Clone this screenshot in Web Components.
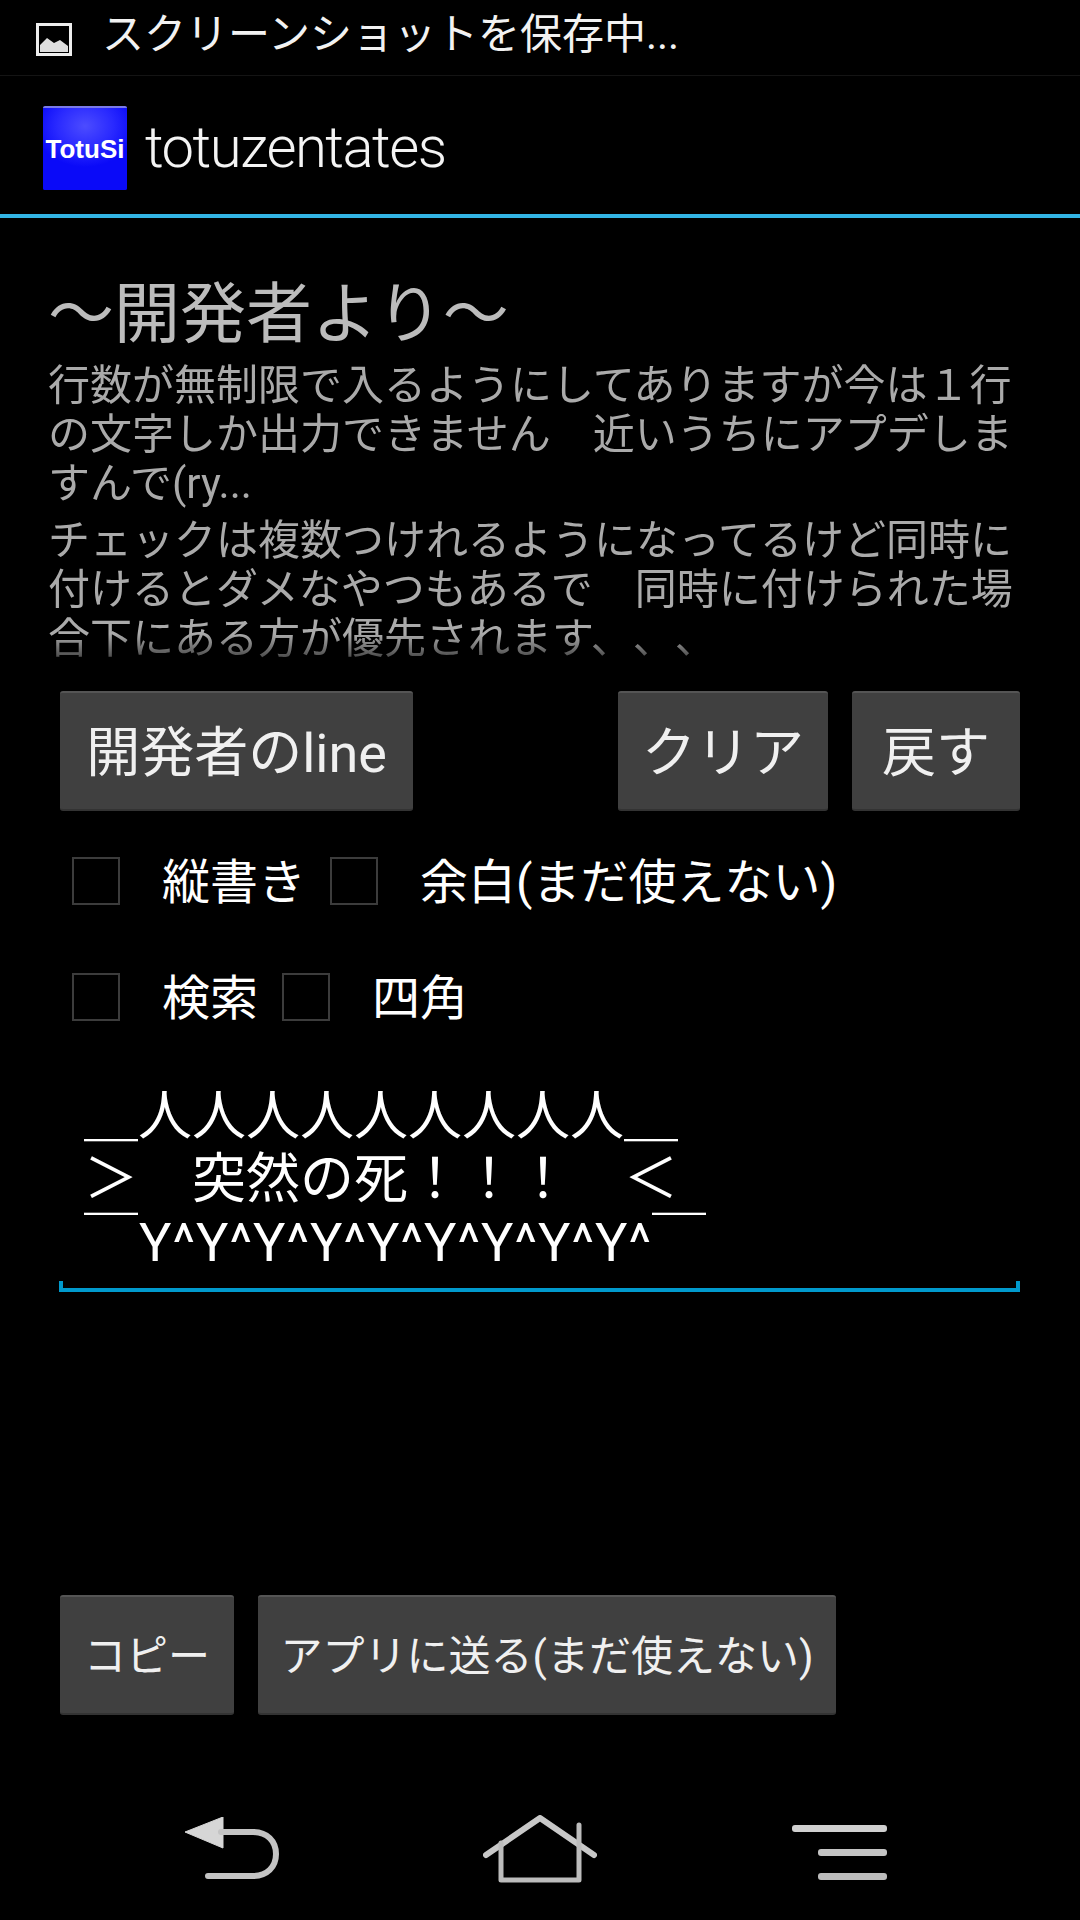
<!DOCTYPE html>
<html lang="ja">
<head>
<meta charset="utf-8">
<title>totuzentates</title>
<style>
  html, body { margin: 0; background: #000; }
  body { font-family: Roboto, "Noto Sans CJK JP", sans-serif; color: #fff; text-spacing-trim: space-all; }
</style>
</head>
<body>
<app-screen>
  <status-bar>スクリーンショットを保存中...</status-bar>
  <action-bar>totuzentates</action-bar>
  <dev-notes>
    <span slot="heading">〜開発者より〜</span>
    <p>行数が無制限で入るようにしてありますが今は１行の文字しか出力できません　近いうちにアプデしますんで(ry...</p>
    <p>チェックは複数つけれるようになってるけど同時に付けるとダメなやつもあるで　同時に付けられた場合下にある方が優先されます、、、</p>
  </dev-notes>
  <button-row>
    <holo-button style="width:353px">開発者のline</holo-button>
    <holo-button slot="end" style="width:210px">クリア</holo-button>
    <holo-button slot="end" style="width:168px">戻す</holo-button>
  </button-row>
  <check-row>
    <holo-check>縦書き</holo-check>
    <holo-check>余白(まだ使えない)</holo-check>
  </check-row>
  <check-row>
    <holo-check>検索</holo-check>
    <holo-check>四角</holo-check>
  </check-row>
  <edit-area>
    <div>＿人人人人人人人人人＿</div>
    <div>＞　突然の死！！！　＜</div>
    <div style="letter-spacing:1px">￣Y^Y^Y^Y^Y^Y^Y^Y^Y^￣</div>
  </edit-area>
  <button-row slot="footer">
    <holo-button size="small" style="width:174px">コピー</holo-button>
    <holo-button size="small" style="width:578px">アプリに送る(まだ使えない)</holo-button>
  </button-row>
  <nav-bar slot="footer"></nav-bar>
</app-screen>

<script>
  class AppScreen extends HTMLElement {
    constructor() {
      super();
      this.attachShadow({ mode: 'open' }).innerHTML = `
        <style>
          :host { display: flex; flex-direction: column; height: 1920px; width: 1080px; overflow: hidden; background: #000; }
          .main { flex: 1; display: flex; flex-direction: column; }
          .footer { display: flex; flex-direction: column; }
        </style>
        <div class="main"><slot></slot></div>
        <div class="footer"><slot name="footer"></slot></div>`;
    }
  }

  class StatusBar extends HTMLElement {
    constructor() {
      super();
      this.attachShadow({ mode: 'open' }).innerHTML = `
        <style>
          :host { display: flex; align-items: center; height: 75px; padding-left: 36px; border-bottom: 1px solid #141414; font-size: 42px; color: #f2f2f2; }
          svg { width: 36px; height: 33px; margin-right: 30px; margin-top: 4px; flex: none; }
          .text { padding-bottom: 14px; }
        </style>
        <svg viewBox="0 0 36 33">
          <rect x="1.5" y="1.5" width="33" height="30" fill="none" stroke="#eee" stroke-width="3"/>
          <path d="M4 29V22L11 15L18 20L24 17L32 23V29Z" fill="#ddd"/>
        </svg>
        <span class="text"><slot></slot></span>`;
    }
  }

  class ActionBar extends HTMLElement {
    constructor() {
      super();
      this.attachShadow({ mode: 'open' }).innerHTML = `
        <style>
          :host { display: flex; align-items: center; height: 138px; padding-left: 43px; border-bottom: 4px solid #33b5e5; font-size: 58px; font-weight: 300; letter-spacing: -1.5px; color: #f4f4f4; }
          .logo {
            width: 84px; height: 84px; flex: none; margin-right: 18px; margin-top: 6px; box-sizing: border-box;
            display: flex; align-items: center; justify-content: center;
            background: radial-gradient(ellipse 60% 50% at 50% 22%, #4c4cff 0%, #2a2aff 55%, #0a0af8 100%), #00f;
            border-top: 2px solid #7a7ae8;
            border-radius: 2px;
            font: bold 26px "Liberation Sans", sans-serif; letter-spacing: 0; color: #fff;
          }
          .title { padding-top: 4px; }
        </style>
        <div class="logo">TotuSi</div>
        <span class="title"><slot></slot></span>`;
    }
  }

  class DevNotes extends HTMLElement {
    constructor() {
      super();
      this.attachShadow({ mode: 'open' }).innerHTML = `
        <style>
          :host { display: block; height: 462px; box-sizing: border-box; padding: 57px 48px 0; overflow: hidden; font-size: 42px; line-height: 49px; color: #aaa;
            -webkit-mask-image: linear-gradient(#000 calc(100% - 46px), transparent calc(100% - 4px)); mask-image: linear-gradient(#000 calc(100% - 46px), transparent calc(100% - 4px)); }
          .heading { display: block; font-size: 66px; line-height: 80px; color: #bcbcbc; margin-bottom: 6px; }
          ::slotted(p) { margin: 0 0 8px; }
        </style>
        <slot name="heading" class="heading"></slot>
        <div class="body"><slot></slot></div>`;
    }
  }

  class ButtonRow extends HTMLElement {
    constructor() {
      super();
      this.attachShadow({ mode: 'open' }).innerHTML = `
        <style>
          :host { display: flex; padding: 11px 60px 0; gap: 24px; }
          .end { display: flex; gap: 24px; margin-left: auto; }
        </style>
        <slot></slot>
        <div class="end"><slot name="end"></slot></div>`;
    }
  }

  class HoloButton extends HTMLElement {
    constructor() {
      super();
      this.attachShadow({ mode: 'open' }).innerHTML = `
        <style>
          :host { display: flex; align-items: center; justify-content: center; box-sizing: border-box; height: 120px; padding-bottom: 6px; border-radius: 3px; font-size: 54px; white-space: nowrap; color: #f0f0f0;
            background: #404040; border-top: 2px solid #555; border-bottom: 2px solid #333; }
          :host([size="small"]) { font-size: 42px; }
        </style>
        <slot></slot>`;
    }
  }

  class CheckRow extends HTMLElement {
    constructor() {
      super();
      this.attachShadow({ mode: 'open' }).innerHTML = `
        <style>
          :host { display: flex; align-items: center; height: 116px; padding-left: 72px; gap: 24px; }
          :host(:first-of-type) { margin-top: 12px; }
        </style>
        <slot></slot>`;
    }
  }

  class HoloCheck extends HTMLElement {
    constructor() {
      super();
      this.attachShadow({ mode: 'open' }).innerHTML = `
        <style>
          :host { display: flex; align-items: center; font-size: 48px; color: #fff; }
          .box { width: 48px; height: 48px; box-sizing: border-box; border: 2px solid #3c3c3c; margin-right: 42px; flex: none; }
          .label { padding-bottom: 6px; }
        </style>
        <div class="box"></div>
        <span class="label"><slot></slot></span>`;
    }
  }

  class EditArea extends HTMLElement {
    constructor() {
      super();
      this.attachShadow({ mode: 'open' }).innerHTML = `
        <style>
          :host { display: block; position: relative; margin: 22px 60px 0 59px; padding: 8px 25px 18px; font-size: 54px; line-height: 63px; color: #fff; white-space: nowrap; }
          .line { position: absolute; left: 0; right: 0; bottom: 0; height: 11px; box-sizing: border-box; border: 4px solid #0099cc; border-top: 0; }
        </style>
        <slot></slot>
        <div class="line"></div>`;
    }
  }

  class NavBar extends HTMLElement {
    constructor() {
      super();
      this.attachShadow({ mode: 'open' }).innerHTML = `
        <style>
          :host { display: flex; align-items: flex-start; height: 205px; box-sizing: border-box; padding: 100px 0 0 185px; }
          svg { display: block; flex: none; }
          .back { width: 94px; height: 62px; margin-top: 2px; }
          .home { width: 114px; height: 68px; margin-left: 204px; }
          .menu { width: 95px; height: 56px; margin-left: 195px; margin-top: 10px; }
        </style>
        <svg class="back" viewBox="0 0 94 62">
          <path d="M0 15L38 0V31Z" fill="#d6d6d6" stroke="#d6d6d6" stroke-width="1" stroke-linejoin="round"/>
          <path d="M36 15H68C82 15 91 24 91 37C91 50 82 59 68 59H23" fill="none" stroke="#c4c4c4" stroke-width="6" stroke-linecap="round"/>
        </svg>
        <svg class="home" viewBox="0 0 114 68">
          <path d="M3 40L57 3L111 40" fill="none" stroke="#c8c8c8" stroke-width="6" stroke-linecap="round" stroke-linejoin="round"/>
          <path d="M18 28V65H96V10" fill="none" stroke="#bcbcbc" stroke-width="5" stroke-linecap="round" stroke-linejoin="round"/>
        </svg>
        <svg class="menu" viewBox="0 0 95 56">
          <rect x="0" y="0" width="95" height="7" rx="3" fill="#d0d0d0"/>
          <rect x="26" y="24" width="69" height="7" rx="3" fill="#c4c4c4"/>
          <rect x="26" y="48" width="69" height="7" rx="3" fill="#bcbcbc"/>
        </svg>`;
    }
  }

  customElements.define('app-screen', AppScreen);
  customElements.define('status-bar', StatusBar);
  customElements.define('action-bar', ActionBar);
  customElements.define('dev-notes', DevNotes);
  customElements.define('button-row', ButtonRow);
  customElements.define('holo-button', HoloButton);
  customElements.define('check-row', CheckRow);
  customElements.define('holo-check', HoloCheck);
  customElements.define('edit-area', EditArea);
  customElements.define('nav-bar', NavBar);
</script>
</body>
</html>
